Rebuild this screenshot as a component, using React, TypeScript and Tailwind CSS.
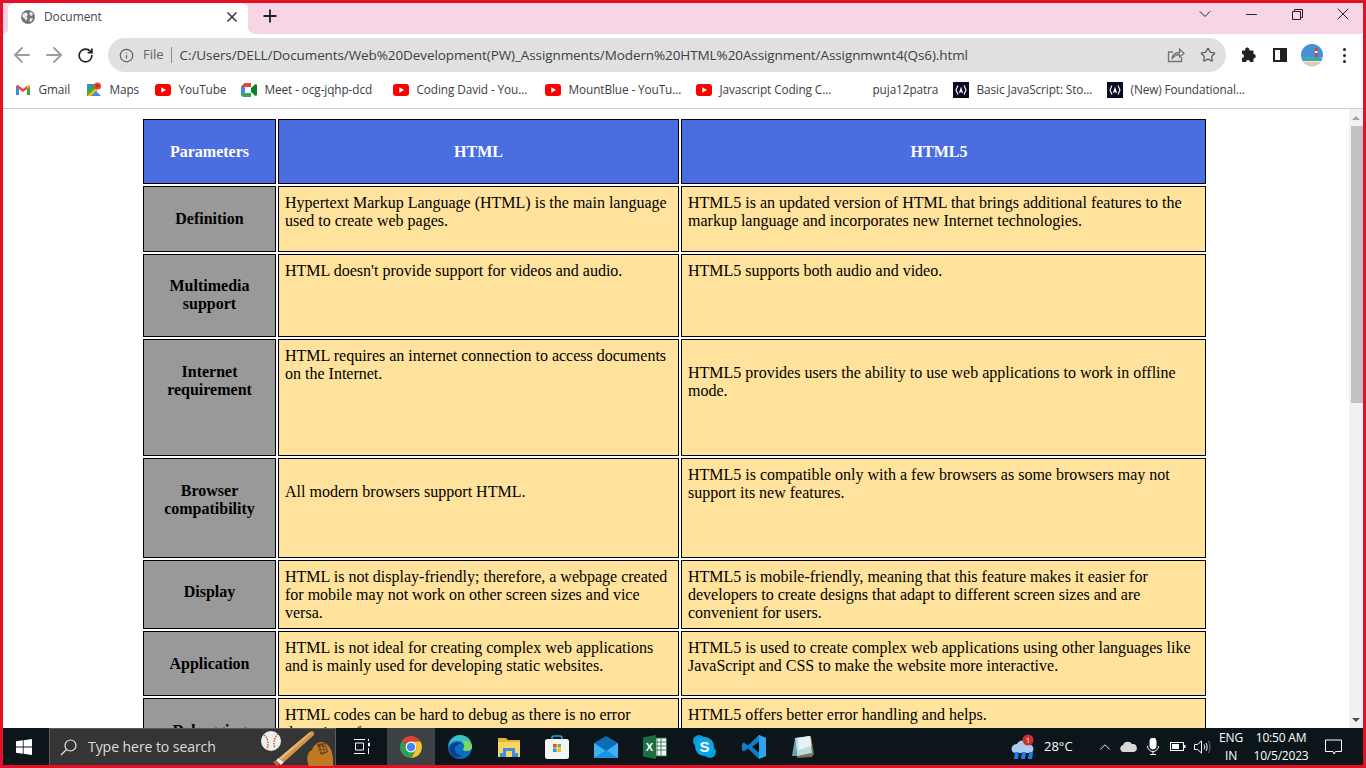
import type React from "react";
import { ArrowLeft, ArrowRight, ChevronDown, ChevronUp, Info, Minus, Plus, RotateCw, Star, X } from "lucide-react";

// Bookmark bar icons
const Gmail = () => (
    <svg width="16" height="16" viewBox="0 0 16 16">
        <path d="M1 4v9h3V7z" fill="#4285f4" />
        <path d="M15 4v9h-3V7z" fill="#34a853" />
        <path d="M1 4.500 2.500 2.800 8 7l5.500-4.200L15 4.500 12 7 8 10 4 7z" fill="#ea4335" />
        <path d="M12 7V3.600l1.500-.8L15 4.500z" fill="#fbbc04" />
    </svg>
);

const Maps = () => (
    <svg width="16" height="16" viewBox="0 0 16 16">
        <path d="M1 2h10v12H1z" fill="#34a853" />
        <path d="M1 14 11 5v9z" fill="#fbbc04" />
        <path d="M5 14l5-5 5 5z" fill="#4285f4" />
        <path d="M1 2h5L1 7z" fill="#4285f4" />
        <circle cx="11.500" cy="4" r="3.500" fill="#ea4335" />
        <circle cx="11.500" cy="4" r="1.200" fill="#a52714" />
    </svg>
);

const YouTube = () => (
    <svg width="16" height="12" viewBox="0 0 16 12">
        <rect width="16" height="12" rx="3" fill="#f00" />
        <path d="M6.300 3.300v5.400L11 6z" fill="#fff" />
    </svg>
);

const Meet = () => (
    <svg width="16" height="14" viewBox="0 0 16 14">
        <path d="M3.500 0H10v4H4v3H0V3.500z" fill="#ea4335" />
        <path d="M10 0v14H7.500v-4H10V4z" fill="#fbbc04" />
        <path d="M10 10v4H3a3 3 0 0 1-3-3V7h4v3z" fill="#34a853" />
        <path d="M0 4h4v6H0z" fill="#4285f4" />
        <path d="M10 5l3-2.500a1 1 0 0 1 3 .5v8a1 1 0 0 1-3 .5L10 9z" fill="#00832d" />
    </svg>
);

const CodeCamp = () => (
    <svg width="16" height="16" viewBox="0 0 16 16">
        <rect width="16" height="16" fill="#0a0a23" />
        <path d="M5 3.500 3 8l2 4.500M11 3.500 13 8l-2 4.500" fill="none" stroke="#fff" strokeWidth="1.100" />
        <path d="M8 4.500 10 11H9L8 9.500 7 11H6z" fill="#fff" />
    </svg>
);

const Globe = () => (
    <svg width="16" height="16" viewBox="0 0 16 16">
        <circle cx="8" cy="8" r="7" fill="#72767a" />
        <path d="M3 4.500 6.500 3.500 8 5.500 6.500 7.500 7.500 9.500 6 12 4.500 9.500 2 7.500zM10 2.500l3 2-1 2.500-2.500-1zM10 9l3 .5-2 3.500-1.500-1z" fill="#e8eaed" />
    </svg>
);

// Toolbar icons
const ShareBox = () => (
    <svg width="18" height="18" viewBox="0 0 18 18" fill="none" stroke="#70757a" strokeWidth="1.300">
        <path d="M14.500 11v4.500H1.500V6H6" />
        <path d="M5 13c.5-4 3-6.500 7.500-6.500V3L17 7.500 12.500 11V8.500C9.500 8.500 7 10 5 13z" />
    </svg>
);

const PuzzleIcon = () => (
    <svg width="16" height="16" viewBox="0 0 16 16" fill="#202124">
        <path d="M6 .5a2 2 0 0 1 2.200 2H8.500V3.500H11.500a1 1 0 0 1 1 1V7a2 2 0 0 1 0 4.500V14a1 1 0 0 1-1 1H9a2 2 0 0 0-4 0H2a1 1 0 0 1-1-1v-3a2 2 0 0 0 0-4V4.500a1 1 0 0 1 1-1h2.200V2.500A2 2 0 0 1 6 .5z" />
    </svg>
);

const SidePanel = () => (
    <div className="flex h-[14px] w-[14px] border-2 border-[#202124]">
        <div className="flex-1 bg-white" />
        <div className="w-[5px] bg-[#202124]" />
    </div>
);

const Avatar = () => (
    <svg width="22" height="22" viewBox="0 0 22 22">
        <clipPath id="av"><circle cx="11" cy="11" r="11" /></clipPath>
        <g clipPath="url(#av)">
            <rect width="22" height="22" fill="#4a8fd6" />
            <rect y="13" width="22" height="5" fill="#dff1f7" />
            <path d="M0 14c3-3 5 0 8-1s5-2 14 1v3H0z" fill="#3aa6b8" />
            <rect y="18" width="22" height="4" fill="#f3c79a" />
            <rect x="14" y="4" width="2.500" height="9" fill="#d9412f" />
            <rect x="14" y="7" width="2.500" height="2" fill="#fff" />
        </g>
    </svg>
);

// Taskbar icons
const WindowsLogo = () => (
    <svg width="16" height="16" viewBox="0 0 16 16" fill="#fff">
        <path d="M0 2.300 6.800 1.300V7.600H0zM7.600 1.200 16 0V7.600H7.600zM0 8.400H6.800V14.700L0 13.700zM7.600 8.400H16V16L7.600 14.800z" />
    </svg>
);

const SearchGlass = () => (
    <svg width="17" height="17" viewBox="0 0 17 17" fill="none" stroke="#e8e8e8" strokeWidth="1.200">
        <circle cx="10.500" cy="6.500" r="5.500" />
        <path d="M6.500 10.500 1 16" />
    </svg>
);

const BaseballDoodle = () => (
    <svg width="76" height="37" viewBox="0 0 76 37">
        <circle cx="14" cy="12" r="10" fill="#eeeeee" />
        <path d="M7 6c4 3 5 8 3 14M21 5c-4 4-5 9-3 14" fill="none" stroke="#d9482f" strokeWidth="1.400" strokeDasharray="1.500 1" />
        <path d="M22 29 53 3c2-2 5 0 4 3L27 33z" fill="#d0954a" />
        <path d="M22 29 53 3l1 1L24 31z" fill="#e6b978" />
        <path d="M21 29l6 4-3 3-5-4z" fill="#f2f2f2" />
        <path d="M16 33l3-2 4 4-3 2z" fill="#a86f2e" />
        <path d="M52 37c-3-6-2-14 3-16 2-6 8-10 13-7 6 3 9 12 8 23z" fill="#c17a24" />
        <path d="M60 15l8-1 3 9-7 3z" fill="#6d3f10" />
        <path d="M62 19h6M63 22h6M64 16l2 8M67 15l2 8" stroke="#d49a50" strokeWidth="0.700" />
    </svg>
);

const TaskView = () => (
    <svg width="16" height="15" viewBox="0 0 16 15" fill="none" stroke="#fff" strokeWidth="1">
        <path d="M0 .5h11M0 14.500h11M1.500 4h8v7h-8zM14.500 0v2M14.500 4h1v3h-1zM14.500 9v6" />
    </svg>
);

const ChromeLogo = ({ size = 24 }: { size?: number }) => (
    <svg width={size} height={size} viewBox="0 0 48 48">
        <path d="M24 2a22 22 0 0 1 19.050 11H24a11 11 0 0 0-9.530 5.500L4.950 13A22 22 0 0 1 24 2z" fill="#db4437" />
        <path d="M43.050 13A22 22 0 0 1 24 46l9.530-16.500A11 11 0 0 0 24 13z" fill="#fbc02d" />
        <path d="M4.950 13A22 22 0 0 0 24 46l9.530-16.500a11 11 0 0 1-19.060-11z" fill="#2e9e4f" />
        <circle cx="24" cy="24" r="11" fill="#fff" />
        <circle cx="24" cy="24" r="8.500" fill="#4285f4" />
    </svg>
);

const EdgeLogo = () => (
    <svg width="24" height="24" viewBox="0 0 24 24">
        <circle cx="12" cy="12" r="12" fill="#0c6fc0" />
        <path d="M0 12C1 4 7 0 12 0c7 0 12 5 12 12 0 2-2 4-5 4s-4-1-4-2c2-1 2-5-1-7S2 6 0 12z" fill="#35c1c7" />
        <path d="M24 12c0 2-2 4-5 4s-4-1-4-2c2-1 2-5-1-7 5-3 10 0 10 5z" fill="#7fd65a" />
        <path d="M7 14c0 4 4 7 8 6-3 3-8 3-11 0-3-4-3-8-1-10 3-3 8-3 10-1-3 0-6 2-6 5z" fill="#0a3f8a" />
    </svg>
);

const FolderLogo = () => (
    <svg width="22" height="20" viewBox="0 0 22 20">
        <path d="M0 1h8l2 2h12v17H0z" fill="#e8b436" />
        <path d="M0 5h22v15H0z" fill="#fbd465" />
        <path d="M5 11h12v5h3v4H2v-4h3z" fill="#3d8fd8" />
        <path d="M8 14h6v6H8z" fill="#fbd465" />
    </svg>
);

const StoreLogo = () => (
    <svg width="24" height="24" viewBox="0 0 24 24">
        <path d="M7 6V3a2 2 0 0 1 2-2h6a2 2 0 0 1 2 2v3" fill="none" stroke="#2b9fe0" strokeWidth="1.600" />
        <rect y="4" width="24" height="20" rx="2.500" fill="#f4f4f4" />
        <rect x="8" y="9" width="3.600" height="3.600" fill="#e74c25" />
        <rect x="12.400" y="9" width="3.600" height="3.600" fill="#7cb82f" />
        <rect x="8" y="13.400" width="3.600" height="3.600" fill="#1f9ee8" />
        <rect x="12.400" y="13.400" width="3.600" height="3.600" fill="#fbb60b" />
    </svg>
);

const MailLogo = () => (
    <svg width="24" height="22" viewBox="0 0 24 22">
        <path d="M0 7 12 0l12 7v2L12 15 0 9z" fill="#0e6bb8" />
        <path d="M0 7l12 8L24 7v15H0z" fill="#3db2f2" />
        <path d="M0 22l12-8 12 8z" fill="#1d92df" />
    </svg>
);

const ExcelLogo = () => (
    <svg width="24" height="24" viewBox="0 0 24 24">
        <rect x="10" y="3" width="13.500" height="18" fill="#f4f4f4" stroke="#1f7246" strokeWidth="0.800" />
        <path d="M14 3v18M18 3v18M10 7h13M10 11h13M10 15h13" stroke="#1f7246" strokeWidth="0.800" />
        <path d="M0 2.500 13 0v24L0 21.500z" fill="#1d6f42" />
        <text x="6.500" y="16" textAnchor="middle" fontSize="11" fontWeight="700" fill="#fff" fontFamily="Liberation Sans, sans-serif">X</text>
    </svg>
);

const SkypeLogo = () => (
    <svg width="23" height="23" viewBox="0 0 23 23">
        <circle cx="6" cy="6" r="6" fill="#0a9ade" />
        <circle cx="17" cy="17" r="6" fill="#0a9ade" />
        <circle cx="11.500" cy="11.500" r="9.500" fill="#0ea5e6" />
        <text x="11.500" y="17" textAnchor="middle" fontSize="15" fontWeight="700" fill="#fff" fontFamily="Liberation Sans, sans-serif">S</text>
    </svg>
);

const VsCodeLogo = () => (
    <svg width="24" height="24" viewBox="0 0 24 24">
        <path d="M17 0 24 3v18l-7 3-11-10.500-4 3L0 15V9l2-1.500 4 3z" fill="#0f7ec9" />
        <path d="M17 0 24 3v18l-7 3V0zM17 6.500 10 12l7 5.500z" fill="#2aa5ee" />
        <path d="M17 6.500 10 12l7 5.500z" fill="#0d0d0d" />
    </svg>
);

const NotepadLogo = () => (
    <svg width="24" height="24" viewBox="0 0 24 24">
        <path d="M5 3 21 1l3 18-2 3-15 1z" fill="#7e6f55" />
        <path d="M5 3 20 1l2 17-15 3z" fill="#b7dce3" />
        <path d="M8 3 20 1l1.500 10-13 4z" fill="#e6f3f5" />
        <path d="M2 21 5 3l2 18z" fill="#6fa2ad" />
    </svg>
);

const WeatherIcon = () => (
    <svg width="24" height="26" viewBox="0 0 24 26">
        <path d="M1 17a5 5 0 0 1 5-7 6 6 0 0 1 11 0 5 5 0 0 1 5 7 4 4 0 0 1-3 2H4a4 4 0 0 1-3-2z" fill="#a9cdf2" />
        <path d="M3 25l1-7h4l-1 7zM10 25l1-7h4l-1 7zM17 25l1-7h4l-1 7z" fill="#1e7fe6" />
        <circle cx="17" cy="6" r="5.500" fill="#d0312a" />
        <text x="17" y="9" textAnchor="middle" fontSize="8" fill="#fff" fontFamily="Open Sans, sans-serif">1</text>
    </svg>
);

const OneDrive = () => (
    <svg width="17" height="11" viewBox="0 0 17 11" fill="#d8d8d8">
        <path d="M3.500 11a3.500 3.500 0 0 1-.5-6.900A5 5 0 0 1 12 3a4 4 0 0 1 1.500 8z" />
    </svg>
);

const Mic = () => (
    <svg width="12" height="17" viewBox="0 0 12 17" fill="none" stroke="#fff" strokeWidth="1">
        <rect x="3" y="0" width="6" height="11" rx="3" fill="#fff" />
        <path d="M.5 8a5.500 5.500 0 0 0 11 0M6 13.500V16.500M3 16.500h6" />
    </svg>
);

const Battery = () => (
    <svg width="16" height="10" viewBox="0 0 16 10">
        <rect x=".5" y=".5" width="13" height="8" fill="none" stroke="#fff" />
        <rect x="2" y="2" width="7" height="5" fill="#fff" />
        <rect x="14" y="3" width="1.500" height="3" fill="#fff" />
    </svg>
);

const Speaker = () => (
    <svg width="17" height="14" viewBox="0 0 17 14" fill="none" stroke="#fff" strokeWidth="1">
        <path d="M.5 4.500h3L7.500 1v12L3.500 9.500h-3z" />
        <path d="M10 4.500c1 1.500 1 3.500 0 5M12 3c1.500 2.500 1.500 5.500 0 8" />
        <path d="M14.500 1c2 3.500 2 8.500 0 12" stroke="#777" />
    </svg>
);

const Notification = () => (
    <svg width="17" height="16" viewBox="0 0 17 16" fill="none" stroke="#fff" strokeWidth="1">
        <path d="M.5 1h16v11.500h-6L9 15l-1-2.500H.5z" />
    </svg>
);

const bookmarks: { width: string; text: string; icon: React.ReactNode }[] = [
    { width: "w-[71px]", text: "Gmail", icon: <Gmail /> },
    { width: "w-[69px]", text: "Maps", icon: <Maps /> },
    { width: "w-[86px]", text: "YouTube", icon: <YouTube /> },
    { width: "w-[152px]", text: "Meet - ocg-jqhp-dcd", icon: <Meet /> },
    { width: "w-[152px]", text: "Coding David - You...", icon: <YouTube /> },
    { width: "w-[151px]", text: "MountBlue - YouTu...", icon: <YouTube /> },
    { width: "w-[153px]", text: "Javascript Coding C...", icon: <YouTube /> },
    { width: "w-[104px]", text: "puja12patra", icon: null },
    { width: "w-[154px]", text: "Basic JavaScript: Sto...", icon: <CodeCamp /> },
    { width: "w-[140px]", text: "(New) Foundational...", icon: <CodeCamp /> },
];

const taskApps: { width: string; active?: boolean; icon: React.ReactNode }[] = [
    { width: "w-[48px]", active: true, icon: <ChromeLogo /> },
    { width: "w-[49px]", icon: <EdgeLogo /> },
    { width: "w-[49px]", icon: <FolderLogo /> },
    { width: "w-[48px]", icon: <StoreLogo /> },
    { width: "w-[49px]", icon: <MailLogo /> },
    { width: "w-[50px]", icon: <ExcelLogo /> },
    { width: "w-[49px]", icon: <SkypeLogo /> },
    { width: "w-[49px]", icon: <VsCodeLogo /> },
    { width: "w-[48px]", icon: <NotepadLogo /> },
];

// Table cell shared classes
const thCls = "border border-black bg-[#999999] px-[6px] text-center font-bold text-black";
const tdCls = "border border-black bg-[#ffe29c] px-[6px] font-normal text-black align-top";

// Main component
const App: React.FC = () => {
    return (
        <div className="flex h-[768px] w-[1366px] flex-col overflow-hidden bg-[#e31027] p-[3px] font-['Open_Sans',sans-serif]">
            {/* Tab strip */}
            <div className="flex h-[31px] shrink-0 bg-[linear-gradient(#f6d5e4_50%,#ffffff_50%)]">
                <div className="w-[5px] rounded-br-[7px] bg-[#f6d5e4]" />
                <div className="flex w-[240px] items-center rounded-t-[6px] bg-white pb-[3px] pl-[12px] pr-[8px]">
                    <Globe />
                    <span className="ml-[8px] flex-1 text-[12px] tracking-[-0.1px] text-[#45494d]">Document</span>
                    <X size={16} strokeWidth={2.6} className="text-[#3c4043]" />
                </div>
                <div className="flex flex-1 items-center rounded-bl-[7px] bg-[#f6d5e4] pl-[12px]">
                    <Plus size={20} strokeWidth={2.2} className="mb-[5px] text-[#202124]" />
                    <div className="ml-auto mb-[9px] flex w-[46px] justify-center">
                        <ChevronDown size={20} strokeWidth={1.2} className="text-[#202124]" />
                    </div>
                    <div className="mb-[9px] flex w-[46px] justify-center">
                        <Minus size={17} strokeWidth={1.4} className="text-[#202124]" />
                    </div>
                    <div className="mb-[9px] flex w-[46px] justify-center">
                        <svg width="11" height="11" viewBox="0 0 11 11" fill="none" stroke="#202124">
                            <path d="M.5 2.500h8v8h-8zM2.500 2.500v-2h8v8h-2" />
                        </svg>
                    </div>
                    <div className="mb-[9px] flex w-[43px] pl-[13px]">
                        <X size={20} strokeWidth={1.2} className="text-[#202124]" />
                    </div>
                </div>
            </div>

            {/* Toolbar */}
            <div className="flex h-[42px] shrink-0 items-center bg-white pl-[7px]">
                <ArrowLeft size={24} strokeWidth={1.8} className="text-[#9a9ea3]" />
                <ArrowRight size={24} strokeWidth={1.8} className="ml-[8px] text-[#9a9ea3]" />
                <RotateCw size={17} strokeWidth={2.4} className="ml-[11px] text-[#202124]" />
                <div className="ml-[14px] flex h-[34px] w-[1118px] items-center rounded-full bg-[#e0e0e0] pl-[11px] pr-[10px]">
                    <Info size={15} className="text-[#5f6368]" />
                    <span className="ml-[9px] text-[13px] text-[#5f6368]">File</span>
                    <div className="ml-[7px] h-[16px] w-px bg-[#8a8d91]" />
                    <span className="ml-[8px] flex-1 whitespace-nowrap text-[13.5px] tracking-[-0.09px] text-[#3c4043]">
                        C:/Users/DELL/Documents/Web%20Development(PW)_Assignments/Modern%20HTML%20Assignment/Assignmwnt4(Qs6).html
                    </span>
                    <ShareBox />
                    <Star size={16} className="ml-[15px] text-[#5f6368]" />
                </div>
                <div className="ml-[15px]"><PuzzleIcon /></div>
                <div className="ml-[16px]"><SidePanel /></div>
                <div className="ml-[14px]"><Avatar /></div>
                <div className="ml-[20px] flex flex-col gap-[3px]">
                    <div className="size-[3px] rounded-full bg-[#202124]" />
                    <div className="size-[3px] rounded-full bg-[#202124]" />
                    <div className="size-[3px] rounded-full bg-[#202124]" />
                </div>
            </div>

            {/* Bookmarks */}
            <div className="flex h-[33px] shrink-0 items-center border-b border-[#cccccc] bg-white pb-[4px] pl-[12px]">
                {bookmarks.map((b) => (
                    <div key={b.text} className={`flex shrink-0 items-center ${b.width}`}>
                        <div className="flex w-[23.500px] shrink-0 items-center">{b.icon}</div>
                        <span className="whitespace-nowrap text-[11.800px] tracking-[-0.1px] text-[#3c4043]">{b.text}</span>
                    </div>
                ))}
            </div>

            {/* Page */}
            <div className="flex min-h-0 flex-1 bg-white">
                <div className="min-w-0 flex-1 overflow-hidden">
                    <table className="ml-[138px] mt-[8px] w-[1067px] table-fixed border-separate border-spacing-[2px] font-['Liberation_Serif',serif] text-[16px] leading-[18px]">
                        <colgroup>
                            <col className="w-[133px]" />
                            <col className="w-[401px]" />
                            <col />
                        </colgroup>
                        <tbody>
                            <tr className="h-[65px]">
                                <th className="border border-black bg-[#4a6ee0] text-center font-bold text-white">Parameters</th>
                                <th className="border border-black bg-[#4a6ee0] text-center font-bold text-white">HTML</th>
                                <th className="border border-black bg-[#4a6ee0] pr-[9px] text-center font-bold text-white">HTML5</th>
                            </tr>
                            <tr className="h-[66px]">
                                <th className={thCls}>Definition</th>
                                <td className={`${tdCls} pt-[7px]`}>Hypertext Markup Language (HTML) is the main language used to create web pages.</td>
                                <td className={`${tdCls} pt-[7px]`}>HTML5 is an updated version of HTML that brings additional features to the markup language and incorporates new Internet technologies.</td>
                            </tr>
                            <tr className="h-[83px]">
                                <th className={`${thCls} pt-[22px] align-top`}>Multimedia support</th>
                                <td className={`${tdCls} pt-[7px]`}>HTML doesn't provide support for videos and audio.</td>
                                <td className={`${tdCls} pt-[7px]`}>HTML5 supports both audio and video.</td>
                            </tr>
                            <tr className="h-[117px]">
                                <th className={`${thCls} pt-[23px] align-top`}>Internet requirement</th>
                                <td className={`${tdCls} pt-[7px]`}>HTML requires an internet connection to access documents on the Internet.</td>
                                <td className={`${tdCls} pt-[24px]`}>HTML5 provides users the ability to use web applications to work in offline mode.</td>
                            </tr>
                            <tr className="h-[100px]">
                                <th className={`${thCls} pt-[23px] align-top`}>Browser compatibility</th>
                                <td className={`${tdCls} pt-[24px]`}>All modern browsers support HTML.</td>
                                <td className={`${tdCls} pt-[7px]`}>HTML5 is compatible only with a few browsers as some browsers may not support its new features.</td>
                            </tr>
                            <tr className="h-[69px]">
                                <th className={`${thCls} pt-[22px] align-top`}>Display</th>
                                <td className={`${tdCls} pt-[7px]`}>HTML is not display-friendly; therefore, a webpage created for mobile may not work on other screen sizes and vice versa.</td>
                                <td className={`${tdCls} pt-[7px]`}>HTML5 is mobile-friendly, meaning that this feature makes it easier for developers to create designs that adapt to different screen sizes and are convenient for users.</td>
                            </tr>
                            <tr className="h-[65px]">
                                <th className={thCls}>Application</th>
                                <td className={`${tdCls} pt-[7px]`}>HTML is not ideal for creating complex web applications and is mainly used for developing static websites.</td>
                                <td className={`${tdCls} pt-[7px]`}>HTML5 is used to create complex web applications using other languages like JavaScript and CSS to make the website more interactive.</td>
                            </tr>
                            <tr className="h-[65px]">
                                <th className={`${thCls} pt-[23px] align-top`}>Debugging</th>
                                <td className={`${tdCls} pt-[7px]`}>HTML codes can be hard to debug as there is no error detection of errors.</td>
                                <td className={`${tdCls} pt-[7px]`}>HTML5 offers better error handling and helps.</td>
                            </tr>
                        </tbody>
                    </table>
                </div>

                {/* Scrollbar */}
                <div className="flex w-[14px] shrink-0 flex-col bg-[#f1f1f1]">
                    <div className="flex h-[17px] items-center justify-center">
                        <div className="size-0 border-x-[4px] border-b-[4px] border-x-transparent border-b-[#a3a3a3]" />
                    </div>
                    <div className="ml-[2px] h-[277px] bg-[#c1c1c1]" />
                    <div className="mt-auto flex h-[17px] items-center justify-center">
                        <div className="size-0 border-x-[4px] border-t-[4px] border-x-transparent border-t-[#505050]" />
                    </div>
                </div>
            </div>

            {/* Taskbar */}
            <div className="flex h-[37px] shrink-0 items-stretch bg-[#0c1519] text-white">
                <div className="flex w-[46px] items-center justify-center pr-[4px]"><WindowsLogo /></div>
                <div className="flex w-[287px] items-center border-x border-t border-[#5b5b5b] bg-[#353535] pl-[10px]">
                    <SearchGlass />
                    <span className="ml-[11px] text-[14.100px] tracking-[-0.1px] text-[#dcdcdc]">Type here to search</span>
                    <div className="ml-auto mr-[2px]"><BaseballDoodle /></div>
                </div>
                <div className="flex w-[51px] items-center justify-center pl-[1px]"><TaskView /></div>
                {taskApps.map((app, i) => (
                    <div key={i} className={`flex items-center justify-center ${app.width} ${app.active ? "bg-[#3c4144]" : ""}`}>
                        {app.icon}
                    </div>
                ))}

                <div className="ml-auto flex items-center">
                    <WeatherIcon />
                    <span className="ml-[9px] w-[52px] text-[13px]">28°C</span>
                    <ChevronUp size={18} strokeWidth={1.2} />
                    <div className="ml-[6px]"><OneDrive /></div>
                    <div className="ml-[10px]"><Mic /></div>
                    <div className="ml-[11px]"><Battery /></div>
                    <div className="ml-[8px]"><Speaker /></div>
                    <div className="ml-[7px] flex w-[26px] flex-col items-center pt-[1px] text-[12px] leading-[18px] tracking-[-0.1px]">
                        <span>ENG</span>
                        <span>IN</span>
                    </div>
                    <div className="ml-[7px] flex w-[60px] flex-col items-center pt-[1px] text-[12px] leading-[18px] tracking-[-0.2px]">
                        <span>10:50 AM</span>
                        <span>10/5/2023</span>
                    </div>
                    <div className="ml-[14px] mr-[21px]"><Notification /></div>
                </div>
            </div>
        </div>
    );
};

export default App;
